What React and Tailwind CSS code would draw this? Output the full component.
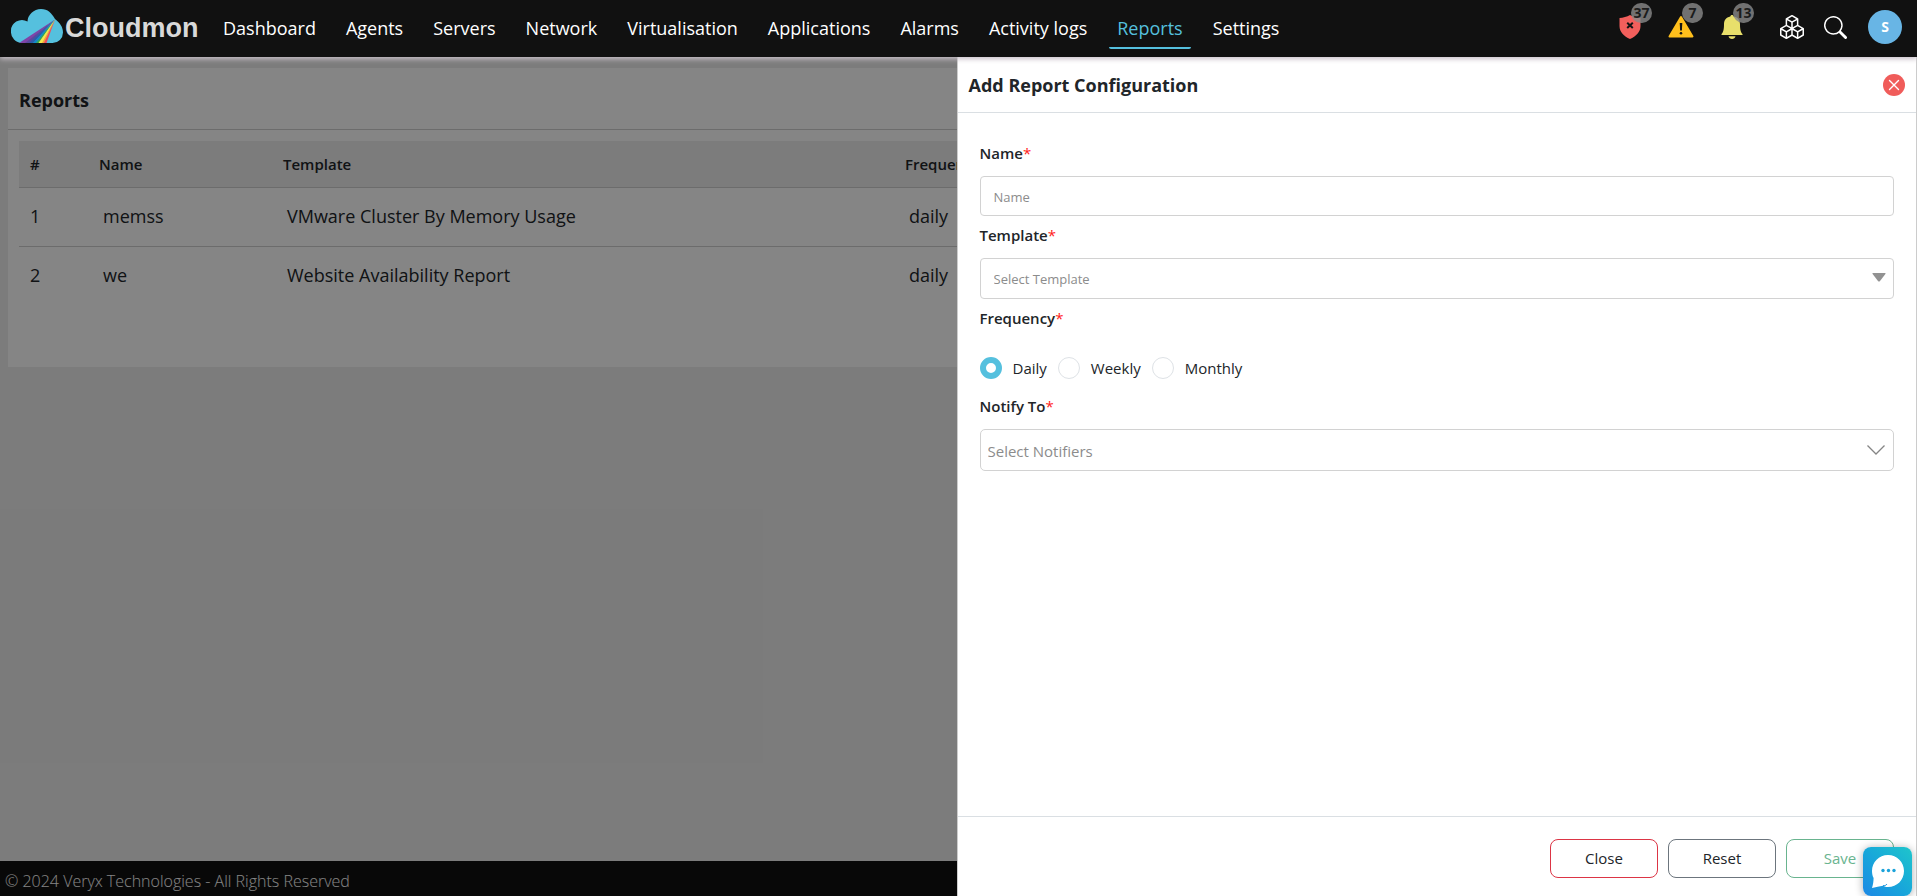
import { BsBoxes, BsSearch } from "react-icons/bs";

const NAV = [
  "Dashboard",
  "Agents",
  "Servers",
  "Network",
  "Virtualisation",
  "Applications",
  "Alarms",
  "Activity logs",
  "Reports",
  "Settings",
];

const REPORTS = [
  { id: 1, name: "memss", template: "VMware Cluster By Memory Usage", frequency: "daily" },
  { id: 2, name: "we", template: "Website Availability Report", frequency: "daily" },
];

function CloudLogo() {
  return (
    <svg viewBox="0 0 52 34" className="h-[34px] w-[52px]" aria-hidden="true">
      <defs>
        <clipPath id="cloud">
          <path d="M11 34A11 11 0 0 1 0 22.500A11 11 0 0 1 16.500 12.500A14 13 0 0 1 30 0C37 0 40.500 4 44 10C49 14 52 18 52 23.500A10.500 10.500 0 0 1 41.500 34Z" />
        </clipPath>
      </defs>
      <g clipPath="url(#cloud)">
        <rect width="52" height="34" fill="#55c0de" />
        <path d="M44 10.500L8 34H15Z" fill="#8043a8" />
        <path d="M44 10.500L14 34H19Z" fill="#5c479c" />
        <path d="M44 10.500L18 34H22.500Z" fill="#2c5caa" />
        <path d="M44 10.500L22 34H25.500Z" fill="#1489c9" />
        <path d="M44 10.500L25 34H28Z" fill="#33a457" />
        <path d="M44 10.500L27.500 34H31.500Z" fill="#f3e94c" />
        <path d="M44 10.500L31 34H33.500Z" fill="#f8a13a" />
        <path d="M44 10.500L33 34H35.500Z" fill="#ee4b5c" />
      </g>
    </svg>
  );
}

function ShieldIcon() {
  return (
    <svg viewBox="0 0 22 24" className="h-6 w-[22px]" aria-hidden="true">
      <path d="M11 0C14 1.800 18 2.800 21.500 3V11C21.500 17 17 21.500 11 24C5 21.500 .5 17 .5 11V3C4 2.800 8 1.800 11 0Z" fill="#f25f5c" />
      <path d="M8.200 7.800L13.800 13M13.800 7.800L8.200 13" stroke="#151515" strokeWidth="2" />
    </svg>
  );
}

function WarningIcon() {
  return (
    <svg viewBox="0 0 26 24" className="h-6 w-[26px]" aria-hidden="true">
      <path d="M13 2L24.500 21.500H1.500Z" fill="#ffbf1c" stroke="#ffbf1c" strokeWidth="2" strokeLinejoin="round" />
      <path d="M11.700 8H14.300L13.900 15.500H12.100Z" fill="#151515" />
      <circle cx="13" cy="18.300" r="1.300" fill="#151515" />
    </svg>
  );
}

function BellIcon() {
  return (
    <svg viewBox="0 0 22 24" className="h-6 w-[22px]" aria-hidden="true">
      <path d="M11 0C12 0 12.600 .6 12.700 1.600C17 2.400 19 5.500 19 9.500C19 15 20 17.500 21.500 19V20H.5V19C2 17.500 3 15 3 9.500C3 5.500 5 2.400 9.300 1.600C9.400 .6 10 0 11 0Z" fill="#e8df6b" />
      <path d="M7.500 21.300H14.500C14 23 12.800 24 11 24C9.200 24 8 23 7.500 21.300Z" fill="#e8df6b" />
    </svg>
  );
}

function Alert({ label, count, children }) {
  return (
    <button type="button" aria-label={label} className="relative flex w-[26px] justify-center">
      {children}
      <span className="absolute -top-3 left-[14px] flex h-5 w-[21px] items-center justify-center rounded-full bg-[#8a8a8a]/80 text-sm leading-5 font-bold text-[#1c1c1c]">
        {count}
      </span>
    </button>
  );
}

function Header() {
  return (
    <header className="relative z-20 flex shrink-0 items-start bg-[#111111] shadow-[0_2px_5px_#c9c0c9]">
      <a href="#home" className="flex w-[215px] items-start pt-[9px] pl-[11px]">
        <CloudLogo />
        <span className="pt-px pl-[2px] font-['Liberation_Sans',Arial,sans-serif] text-[27px] leading-9 font-bold text-[#d9d9d9]">
          Cloudmon
        </span>
      </a>
      <nav className="flex gap-[14px] pt-[14px] pb-2">
        {NAV.map((item) => (
          <a
            key={item}
            href="#nav"
            aria-current={item === "Reports" ? "page" : undefined}
            className={
              item === "Reports"
                ? "rounded-[2px] border-b-2 border-[#55c0de] px-2 pb-[5px] text-lg leading-7 whitespace-nowrap text-[#55c0de]"
                : "border-b-2 border-transparent px-2 pb-[5px] text-lg leading-7 whitespace-nowrap text-white"
            }
          >
            {item}
          </a>
        ))}
      </nav>
      <div className="ml-auto flex items-center pt-[10px] pr-[15px] text-white">
        <div className="flex gap-[25px] pr-[35px]">
          <Alert label="Critical alarms" count={37}>
            <ShieldIcon />
          </Alert>
          <Alert label="Warnings" count={7}>
            <WarningIcon />
          </Alert>
          <Alert label="Notifications" count={13}>
            <BellIcon />
          </Alert>
        </div>
        <button type="button" aria-label="Modules" className="mr-5">
          <BsBoxes className="size-6" />
        </button>
        <button type="button" aria-label="Search" className="mr-[21px]">
          <BsSearch className="size-[23px]" />
        </button>
        <button
          type="button"
          aria-label="Account"
          className="flex size-[34px] items-center justify-center rounded-full bg-[#68b5e5] text-sm font-bold"
        >
          S
        </button>
      </div>
    </header>
  );
}

function ReportsPage() {
  return (
    <>
      <main className="flex-1 pt-[11px] pr-2 pl-2">
        <section className="bg-white pb-[62px]">
          <h1 className="border-b border-[#cfcfcf] px-[11px] pt-[19px] pb-[15px] text-lg leading-[27px] font-bold">Reports</h1>
          <div className="px-[11px] pt-[11px]">
            <table className="w-full table-fixed text-left">
              <thead>
                <tr className="h-[46px] border-b border-[#cfcfcf] bg-[#ededed] text-[15px]">
                  <th className="w-[69px] pl-[11px] font-semibold">#</th>
                  <th className="w-[184px] pl-[11px] font-semibold">Name</th>
                  <th className="w-[622px] pl-[11px] font-semibold">Template</th>
                  <th className="pl-[11px] font-semibold">Frequency</th>
                </tr>
              </thead>
              <tbody className="text-lg">
                {REPORTS.map((r) => (
                  <tr key={r.id} className="h-[59px] border-b border-[#cfcfcf] last:border-0">
                    <td className="pb-[2px] pl-[11px]">{r.id}</td>
                    <td className="pb-[2px] pl-[15px]">{r.name}</td>
                    <td className="pb-[2px] pl-[15px]">{r.template}</td>
                    <td className="pb-[2px] pl-[15px]">{r.frequency}</td>
                  </tr>
                ))}
              </tbody>
            </table>
          </div>
        </section>
      </main>
      <footer className="bg-[#111111] px-[5px] pt-[8px] pb-[3px] text-base leading-6 font-light text-white">
        © 2024 Veryx Technologies - All Rights Reserved
      </footer>
      <div className="absolute inset-0 bg-black/48" />
    </>
  );
}

function Star() {
  return <span className="font-normal text-[#ff2020]">*</span>;
}

function Frequency({ id, label, defaultChecked }) {
  return (
    <span className="flex items-center gap-[11px]">
      <input
        type="radio"
        name="frequency"
        id={id}
        defaultChecked={defaultChecked}
        className="size-[22px] appearance-none rounded-full border border-[#dee2e6] bg-white checked:border-[6px] checked:border-[#55c0de]"
      />
      <label htmlFor={id}>{label}</label>
    </span>
  );
}

function ReportDrawer() {
  return (
    <aside
      aria-labelledby="drawer-title"
      className="absolute inset-y-0 right-0 z-10 flex w-[calc(50%+2px)] min-w-[640px] flex-col border-x border-[#cccccc] bg-white"
    >
      <div className="flex h-14 items-center justify-between border-b border-[#dadfe3] pr-[11px] pl-[11px]">
        <h2 id="drawer-title" className="text-lg font-bold">
          Add Report Configuration
        </h2>
        <button
          type="button"
          aria-label="Close panel"
          className="flex size-[22px] items-center justify-center rounded-full bg-[#f05c5a]"
        >
          <svg viewBox="0 0 12 12" className="size-3" stroke="white" strokeWidth="1.400" strokeLinecap="round">
            <path d="M1.500 1.500L10.500 10.500M10.500 1.500L1.500 10.500" />
          </svg>
        </button>
      </div>
      <form className="flex flex-1 flex-col px-[22px] pt-[29px] text-[15px] leading-[22px]">
        <label htmlFor="name" className="font-semibold">
          Name
          <Star />
        </label>
        <input
          id="name"
          placeholder="Name"
          className="mt-3 mb-2 h-10 rounded-[4px] border border-[#d2d2d2] px-[13px] pt-[2px] text-[13px] placeholder:text-[#8c8c8c]"
        />
        <label htmlFor="template" className="font-semibold">
          Template
          <Star />
        </label>
        <div className="relative mt-3 mb-2">
          <select
            id="template"
            className="h-[41px] w-full appearance-none rounded-[4px] border border-[#d2d2d2] bg-white px-[13px] text-[13px] text-[#8c8c8c]"
          >
            <option>Select Template</option>
          </select>
          <svg viewBox="0 0 14 9" className="pointer-events-none absolute top-[15px] right-2 h-[9px] w-[14px]" fill="#929292">
            <path d="M1 0H13Q14 0 13.400 1L8 8Q7 9 6 8L.6 1Q0 0 1 0Z" />
          </svg>
        </div>
        <fieldset className="mb-4">
          <legend className="font-semibold">
            Frequency
            <Star />
          </legend>
          <div className="flex gap-[11px] pt-7">
            <Frequency id="daily" label="Daily" defaultChecked />
            <Frequency id="weekly" label="Weekly" />
            <Frequency id="monthly" label="Monthly" />
          </div>
        </fieldset>
        <label htmlFor="notify" className="font-semibold">
          Notify To
          <Star />
        </label>
        <div className="relative mt-3">
          <select
            id="notify"
            className="h-[42px] w-full appearance-none rounded-[5px] border border-[#d2d2d2] bg-white px-[7px] pt-px text-[15px] text-[#8c8c8c]"
          >
            <option>Select Notifiers</option>
          </select>
          <svg
            viewBox="0 0 18 10"
            className="pointer-events-none absolute top-4 right-[9px] h-[10px] w-[18px]"
            fill="none"
            stroke="#858585"
            strokeWidth="1.300"
          >
            <path d="M.5 .5L9 9L17.500 .5" />
          </svg>
        </div>
      </form>
      <div className="flex justify-end gap-[10px] border-t border-[#dadfe3] px-[22px] pt-[22px] pb-[18px] text-[15px] font-medium">
        <button type="button" className="h-[39px] w-[108px] rounded-lg border border-[#dc3545]">
          Close
        </button>
        <button type="button" className="h-[39px] w-[108px] rounded-lg border border-[#6c757d]">
          Reset
        </button>
        <button type="button" className="h-[39px] w-[108px] rounded-lg border border-[#69b48f] text-[#69b48f]">
          Save
        </button>
      </div>
    </aside>
  );
}

function ChatButton() {
  return (
    <button
      type="button"
      aria-label="Open chat"
      className="absolute right-[5px] bottom-0 z-30 flex size-[49px] items-center justify-center rounded-lg bg-linear-to-tr from-[#1e88e5] to-[#20c5cb] pb-[2px] shadow-[0_1px_8px_#00000055]"
    >
      <svg viewBox="0 0 34 34" className="size-[34px]" aria-hidden="true">
        <path
          d="M17 1C26 1 33 8 33 17C33 26 26 33 17 33C15 33 13.500 32.600 12 31.800C8.500 32.500 5 33.300 1 34C2.200 30 2.500 27 2.600 24C1.500 22 1 19.500 1 17C1 8 8 1 17 1Z"
          fill="white"
        />
        <path d="M12 31.500C13.500 32 15 31.500 16 30" stroke="#1e96dd" strokeWidth="1" fill="none" />
        <g fill="#1ba2da">
          <circle cx="12" cy="16.500" r="1.700" />
          <circle cx="17.500" cy="16.500" r="1.700" />
          <circle cx="23" cy="16.500" r="1.700" />
        </g>
      </svg>
    </button>
  );
}

export default function App() {
  return (
    <div className="relative flex min-h-screen flex-col overflow-hidden bg-[#ededed] font-['Open_Sans','Noto_Sans',sans-serif] text-[#212529]">
      <Header />
      <div className="relative flex flex-1 flex-col">
        <ReportsPage />
        <ReportDrawer />
      </div>
      <ChatButton />
    </div>
  );
}
